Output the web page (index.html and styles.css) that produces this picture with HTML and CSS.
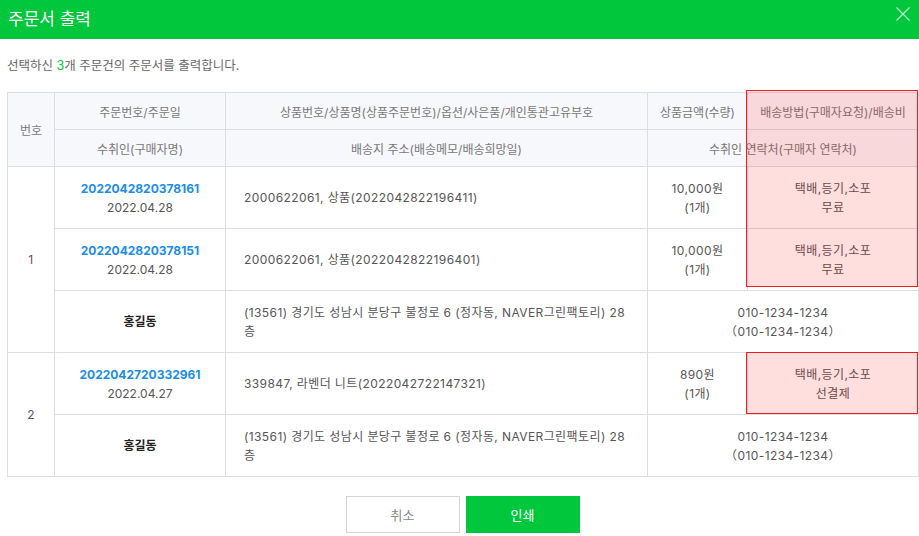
FILE: index.html
```html
<!DOCTYPE html>
<html lang="ko">
<head>
    <meta charset="UTF-8">
    <meta name="viewport" content="width=device-width, initial-scale=1.0">
    <title>주문서 출력</title>
    <link rel="stylesheet" href="styles.css">
</head>
<body>
    <div class="modal">
        <div class="modal-head">
            <h1>주문서 출력</h1>
            <button class="btn-close" type="button" aria-label="닫기">
                <svg width="14" height="14" viewBox="0 0 14 14">
                    <path d="M0.5 0.5L13.5 13.5M13.5 0.5L0.5 13.5" stroke="#fff" stroke-width="1.2" fill="none"/>
                </svg>
            </button>
        </div>

        <div class="modal-body">
            <p class="msg">선택하신 <em>3</em>개 주문건의 주문서를 출력합니다.</p>

            <div class="table-wrap">
                <table class="order-table">
                    <colgroup>
                        <col style="width: 47px">
                        <col style="width: 171px">
                        <col style="width: 422px">
                        <col style="width: 100px">
                        <col style="width: 171px">
                    </colgroup>
                    <thead>
                        <tr>
                            <th rowspan="2">번호</th>
                            <th>주문번호/주문일</th>
                            <th>상품번호/상품명(상품주문번호)/옵션/사은품/개인통관고유부호</th>
                            <th>상품금액(수량)</th>
                            <th>배송방법(구매자요청)/배송비</th>
                        </tr>
                        <tr>
                            <th>수취인(구매자명)</th>
                            <th>배송지 주소(배송메모/배송희망일)</th>
                            <th colspan="2">수취인 연락처(구매자 연락처)</th>
                        </tr>
                    </thead>
                    <tbody>
                        <tr>
                            <td rowspan="3">1</td>
                            <td class="order"><a class="order-no" href="#">2022042820378161</a><br>2022.04.28</td>
                            <td class="left">2000622061, 상품(2022042822196411)</td>
                            <td>10,000원<br>(1개)</td>
                            <td>택배,등기,소포<br>무료</td>
                        </tr>
                        <tr>
                            <td class="order"><a class="order-no" href="#">2022042820378151</a><br>2022.04.28</td>
                            <td class="left">2000622061, 상품(2022042822196401)</td>
                            <td>10,000원<br>(1개)</td>
                            <td>택배,등기,소포<br>무료</td>
                        </tr>
                        <tr>
                            <td class="name">홍길동</td>
                            <td class="left">(13561) 경기도 성남시 분당구 불정로 6 (정자동, NAVER그린팩토리) 28 층</td>
                            <td colspan="2">010-1234-1234<br>（010-1234-1234）</td>
                        </tr>
                        <tr>
                            <td rowspan="2">2</td>
                            <td class="order"><a class="order-no" href="#">2022042720332961</a><br>2022.04.27</td>
                            <td class="left">339847, 라벤더 니트(2022042722147321)</td>
                            <td>890원<br>(1개)</td>
                            <td>택배,등기,소포<br>선결제</td>
                        </tr>
                        <tr>
                            <td class="name">홍길동</td>
                            <td class="left">(13561) 경기도 성남시 분당구 불정로 6 (정자동, NAVER그린팩토리) 28 층</td>
                            <td colspan="2">010-1234-1234<br>（010-1234-1234）</td>
                        </tr>
                    </tbody>
                </table>
                <div class="mark mark-1"></div>
                <div class="mark mark-2"></div>
            </div>

            <div class="btns">
                <button class="btn btn-cancel" type="button">취소</button>
                <button class="btn btn-print" type="button">인쇄</button>
            </div>
        </div>
    </div>
</body>
</html>
```

FILE: styles.css
```css
body {
    margin: 0;
    background-color: #fff;
    font-family: Inter, "Noto Sans CJK KR", sans-serif;
    font-size: 12px;
    color: #666;
}
.modal-head {
    height: 39px;
    background-color: #00c73c;
    display: flex;
    align-items: center;
    justify-content: space-between;
    padding: 0 9px 0 8px;
}
.modal-head h1 {
    margin: 0;
    font-family: "Noto Sans CJK KR", sans-serif;
    font-size: 17px;
    font-weight: normal;
    color: #fff;
    line-height: 24px;
    margin-top: -4px;
}
.btn-close {
    width: 14px;
    height: 14px;
    padding: 0;
    border: none;
    background: none;
    opacity: 0.75;
    margin-top: -12px;
    cursor: pointer;
}
.btn-close svg {
    display: block;
}
.modal-body {
    padding: 18px 0 0 7px;
}
.msg {
    margin: 0 0 17px;
    font-size: 12.5px;
    line-height: 18px;
}
.msg em {
    font-style: normal;
    color: #00c73c;
}
.table-wrap {
    position: relative;
    width: 911px;
}
.order-table {
    width: 911px;
    table-layout: fixed;
    border-collapse: collapse;
}
.order-table th, .order-table td {
    border: 1px solid #dcdde2;
    text-align: center;
    padding: 0 10px;
}
.order-table th {
    height: 36px;
    background-color: #f7f8fb;
    font-weight: normal;
    color: #777;
}
.order-table td {
    height: 61px;
    line-height: 19px;
    color: #555;
    letter-spacing: 0.4px;
}
.order-table td.order {
    letter-spacing: 0;
}
.order-table td.left {
    text-align: left;
    padding: 0 18px;
}
.order-table td.name {
    font-weight: bold;
    color: #222;
    letter-spacing: 0;
}
.order-no {
    color: #1a8cea;
    font-weight: bold;
    text-decoration: none;
}
.mark {
    position: absolute;
    border: 1px solid #ee1c1c;
    background-color: rgba(255, 0, 0, 0.13);
    box-sizing: border-box;
}
.mark-1 {
    left: 739px;
    top: -2px;
    width: 172px;
    height: 197px;
}
.mark-2 {
    left: 739px;
    top: 260px;
    width: 172px;
    height: 62px;
}
.btns {
    display: flex;
    justify-content: center;
    gap: 6px;
    margin-top: 19px;
    width: 911px;
}
.btn {
    width: 114px;
    height: 37px;
    font-family: "Noto Sans CJK KR", sans-serif;
    font-size: 13px;
    cursor: pointer;
}
.btn-cancel {
    background-color: #fff;
    border: 1px solid #d3d4d9;
    color: #888;
}
.btn-print {
    background-color: #00c73c;
    border: none;
    color: #fff;
}
```
